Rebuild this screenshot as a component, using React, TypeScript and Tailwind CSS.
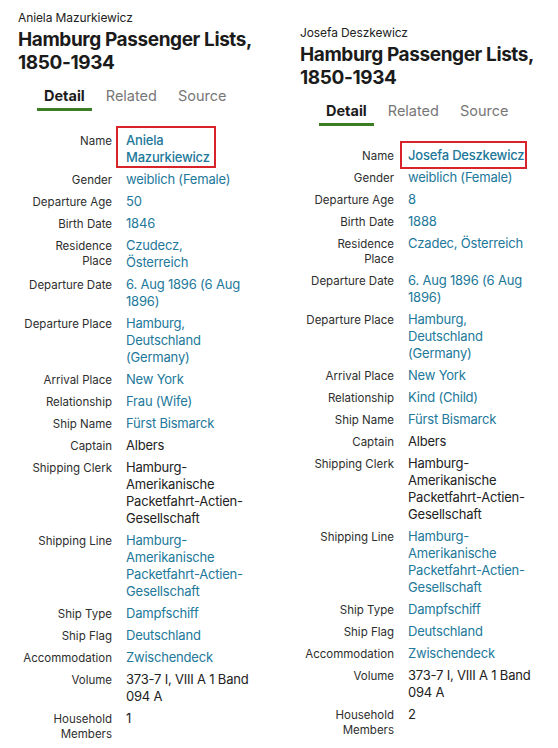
type Row = {
  label: string;
  value: string;
  link?: boolean;
  boxed?: boolean;
};

type Record = {
  person: string;
  rows: Row[];
  box: { left: string; top: string; w: string; h: string };
};

const clerk = "Hamburg-\nAmerikanische\nPacketfahrt-Actien-\nGesellschaft";

const aniela: Record = {
  person: "Aniela Mazurkiewicz",
  box: { left: "-left-[10px]", top: "-top-[6px]", w: "w-[100px]", h: "h-[42px]" },
  rows: [
    { label: "Name", value: "Aniela\nMazurkiewicz", link: true, boxed: true },
    { label: "Gender", value: "weiblich (Female)", link: true },
    { label: "Departure Age", value: "50", link: true },
    { label: "Birth Date", value: "1846", link: true },
    { label: "Residence\nPlace", value: "Czudecz,\nÖsterreich", link: true },
    { label: "Departure Date", value: "6. Aug 1896 (6 Aug\n1896)", link: true },
    { label: "Departure Place", value: "Hamburg,\nDeutschland\n(Germany)", link: true },
    { label: "Arrival Place", value: "New York", link: true },
    { label: "Relationship", value: "Frau (Wife)", link: true },
    { label: "Ship Name", value: "Fürst Bismarck", link: true },
    { label: "Captain", value: "Albers" },
    { label: "Shipping Clerk", value: clerk },
    { label: "Shipping Line", value: clerk, link: true },
    { label: "Ship Type", value: "Dampfschiff", link: true },
    { label: "Ship Flag", value: "Deutschland", link: true },
    { label: "Accommodation", value: "Zwischendeck", link: true },
    { label: "Volume", value: "373-7 I, VIII A 1 Band\n094 A" },
    { label: "Household\nMembers", value: "1" },
  ],
};

const josefa: Record = {
  person: "Josefa Deszkewicz",
  box: { left: "-left-[8px]", top: "-top-[6px]", w: "w-[127px]", h: "h-[28px]" },
  rows: [
    { label: "Name", value: "Josefa Deszkewicz", link: true, boxed: true },
    { label: "Gender", value: "weiblich (Female)", link: true },
    { label: "Departure Age", value: "8", link: true },
    { label: "Birth Date", value: "1888", link: true },
    { label: "Residence\nPlace", value: "Czadec, Österreich", link: true },
    { label: "Departure Date", value: "6. Aug 1896 (6 Aug\n1896)", link: true },
    { label: "Departure Place", value: "Hamburg,\nDeutschland\n(Germany)", link: true },
    { label: "Arrival Place", value: "New York", link: true },
    { label: "Relationship", value: "Kind (Child)", link: true },
    { label: "Ship Name", value: "Fürst Bismarck", link: true },
    { label: "Captain", value: "Albers" },
    { label: "Shipping Clerk", value: clerk },
    { label: "Shipping Line", value: clerk, link: true },
    { label: "Ship Type", value: "Dampfschiff", link: true },
    { label: "Ship Flag", value: "Deutschland", link: true },
    { label: "Accommodation", value: "Zwischendeck", link: true },
    { label: "Volume", value: "373-7 I, VIII A 1 Band\n094 A" },
    { label: "Household\nMembers", value: "2" },
  ],
};

const RecordColumn = ({ record, className }: { record: Record; className: string }) => {
  const { box } = record;
  return (
    <div className={className}>
      <p className="text-[12px] leading-[16px] text-[#222] tracking-[-0.1px]">{record.person}</p>
      <h1 className="mt-[2px] text-[19px] leading-[23px] font-bold text-[#1b1b1b] tracking-[-0.4px] w-[250px]">
        Hamburg Passenger Lists, 1850-1934
      </h1>

      {/* tabs */}
      <div className="ml-[19px] mt-[12px] flex gap-[7px] text-[14.5px] leading-[20px]">
        <span className="px-[7px] pb-[2px] border-b-[3px] border-[#3b7d22] font-bold text-[#1b1b1b]">
          Detail
        </span>
        <span className="px-[7px] pb-[2px] border-b-[3px] border-transparent text-[#777]">Related</span>
        <span className="px-[7px] pb-[2px] border-b-[3px] border-transparent text-[#777]">Source</span>
      </div>

      <div className="mt-[21px] grid grid-cols-[94px_150px] gap-x-[14px] gap-y-[5px] items-baseline">
        {record.rows.map((row) => (
          <div key={row.label} className="contents">
            <div className="text-right text-[11.5px] leading-[15px] text-[#2e2e2e] whitespace-pre-line">
              {row.label}
            </div>
            <div
              className={`relative text-[13px] leading-[17px] tracking-[-0.2px] whitespace-pre-line ${
                row.link ? "text-[#22789a]" : "text-[#222]"
              } ${row.boxed ? "font-medium" : ""}`}
            >
              {row.value}
              {row.boxed && (
                <span
                  className={`absolute ${box.left} ${box.top} ${box.w} ${box.h} border-2 border-[#d8232a]`}
                />
              )}
            </div>
          </div>
        ))}
      </div>
    </div>
  );
};

export default function App() {
  return (
    <div
      className="w-[558px] h-[748px] bg-white flex overflow-hidden"
      style={{ fontFamily: "Inter, 'Liberation Sans', sans-serif" }}
    >
      <RecordColumn record={aniela} className="w-[282px] pl-[18px] pt-[10px]" />
      <RecordColumn record={josefa} className="w-[276px] pl-[18px] pt-[25px]" />
    </div>
  );
}
